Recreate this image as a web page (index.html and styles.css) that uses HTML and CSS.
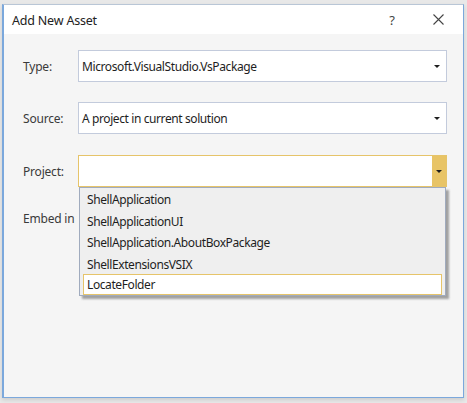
FILE: index.html
```html
<!DOCTYPE html>
<html>
<head>
<meta charset="utf-8">
<link rel="stylesheet" href="styles.css">
</head>
<body>
<div class="backdrop">
  <div class="dialog">
    <div class="titlebar">
      <span class="title">Add New Asset</span>
      <span class="help">?</span>
      <svg class="close" width="11" height="11" viewBox="0 0 11 11"><path d="M0.5 0.5 L10.5 10.5 M10.5 0.5 L0.5 10.5" stroke="#444" stroke-width="1.1" fill="none"/></svg>
    </div>
    <div class="content">
      <div class="row">
        <span class="label">Type:</span>
        <div class="combo">
          <span class="value">Microsoft.VisualStudio.VsPackage</span>
          <span class="arrow"></span>
        </div>
      </div>
      <div class="row">
        <span class="label">Source:</span>
        <div class="combo">
          <span class="value">A project in current solution</span>
          <span class="arrow"></span>
        </div>
      </div>
      <div class="row project-row">
        <span class="label">Project:</span>
        <div class="combo combo-open">
          <span class="value"></span>
          <span class="arrow-btn"><span class="arrow"></span></span>
        </div>
        <ul class="dropdown">
          <li>ShellApplication</li>
          <li>ShellApplicationUI</li>
          <li>ShellApplication.AboutBoxPackage</li>
          <li>ShellExtensionsVSIX</li>
          <li class="selected">LocateFolder</li>
        </ul>
      </div>
      <div class="row embed-row">
        <span class="label embed-label">Embed in this folder:</span>
      </div>
    </div>
  </div>
</div>
</body>
</html>
```

FILE: styles.css
```css
html, body {
  margin: 0;
  padding: 0;
}
body {
  width: 467px;
  height: 403px;
  background: #e8e8e8;
  font-family: "Noto Sans", "Open Sans", sans-serif;
  font-size: 12px;
  color: #333;
  overflow: hidden;
}
.backdrop {
  padding: 4px 3px 5px 2px;
  height: 403px;
  box-sizing: border-box;
}
.dialog {
  height: 394px;
  box-sizing: border-box;
  border: 1px solid #7ba8dc;
  border-left: 2px solid #7ba8dc;
  border-top-color: #b9c6d6;
  background: #f5f5f5;
  display: flex;
  flex-direction: column;
  box-shadow: 0 2px 4px rgba(0,0,0,0.12);
}
.titlebar {
  height: 29px;
  background: #fff;
  display: flex;
  align-items: center;
  padding-left: 8px;
  padding-right: 19px;
}
.title {
  flex: 1;
  font-size: 12.5px;
  color: #222;
  padding-top: 1px;
  letter-spacing: -0.2px;
}
.help {
  font-size: 13px;
  color: #444;
  margin-right: 38px;
}
.close {
  display: block;
}
.content {
  position: relative;
  padding: 16px 16px 0 19px;
  display: flex;
  flex-direction: column;
  gap: 20px;
}
.row {
  display: flex;
  align-items: center;
}
.project-row {
  position: relative;
  margin-top: 1px;
}
.label {
  width: 55px;
  flex: none;
  color: #3a3a3a;
  letter-spacing: -0.2px;
}
.combo {
  flex: 1;
  height: 32px;
  box-sizing: border-box;
  border: 1px solid #c3cbdc;
  background: #fff;
  display: flex;
  align-items: center;
  padding-left: 3px;
  padding-right: 6px;
}
.value {
  flex: 1;
  color: #1e1e1e;
  font-size: 12px;
  letter-spacing: -0.4px;
}
.arrow {
  width: 0;
  height: 0;
  border-left: 3px solid transparent;
  border-right: 3px solid transparent;
  border-top: 3px solid #1e1e1e;
}
.combo-open {
  border-color: #e6c46a;
  padding-right: 0;
}
.arrow-btn {
  align-self: stretch;
  width: 14px;
  background: #e8c466;
  display: flex;
  align-items: center;
  justify-content: center;
}
.dropdown {
  position: absolute;
  left: 56px;
  right: 1px;
  top: 32px;
  margin: 0;
  padding: 0 3px 0 3px;
  list-style: none;
  background: #efefef;
  border: 1px solid #a0abbe;
  box-shadow: 3px 3px 2px rgba(60,60,60,0.45);
  z-index: 2;
}
.dropdown li {
  height: 21.5px;
  line-height: 21.5px;
  box-sizing: border-box;
  padding-left: 3px;
  color: #1e1e1e;
  border: 1px solid transparent;
  white-space: nowrap;
  letter-spacing: -0.4px;
}
.dropdown li.selected {
  background: #fff;
  border-color: #e6c46a;
  height: 21px;
  line-height: 19px;
}
.embed-row {
  margin-top: 3px;
}
.embed-label {
  width: 54px;
  overflow: hidden;
  white-space: nowrap;
}
```
